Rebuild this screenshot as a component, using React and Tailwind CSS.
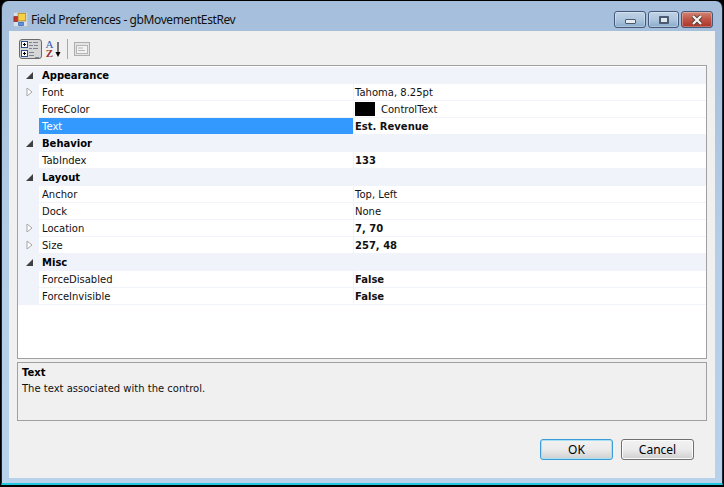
import React from 'react';

const groups = [
  {
    name: 'Appearance',
    rows: [
      { name: 'Font', value: 'Tahoma, 8.25pt', expand: true },
      { name: 'ForeColor', value: 'ControlText', swatch: true },
      { name: 'Text', value: 'Est. Revenue', bold: true, selected: true },
    ],
  },
  { name: 'Behavior', rows: [{ name: 'TabIndex', value: '133', bold: true }] },
  {
    name: 'Layout',
    rows: [
      { name: 'Anchor', value: 'Top, Left' },
      { name: 'Dock', value: 'None' },
      { name: 'Location', value: '7, 70', bold: true, expand: true },
      { name: 'Size', value: '257, 48', bold: true, expand: true },
    ],
  },
  {
    name: 'Misc',
    rows: [
      { name: 'ForceDisabled', value: 'False', bold: true },
      { name: 'ForceInvisible', value: 'False', bold: true },
    ],
  },
];

const AppIcon = () => (
  <svg width="15" height="15" viewBox="0 0 16 16" className="shrink-0 mt-[11px]">
    <rect x="0.5" y="0.5" width="15" height="15" fill="#d9dfe8" stroke="#aeb4bd" strokeDasharray="1 1" />
    <rect x="1" y="5" width="4" height="5" fill="#c8322c" stroke="#7c2320" strokeWidth="0.8" />
    <rect x="5.5" y="1.5" width="8" height="8" fill="#f7cf45" stroke="#b8902a" />
    <rect x="6" y="11" width="5" height="3.5" fill="#5c8fe0" stroke="#3a66b0" strokeWidth="0.8" />
  </svg>
);

const CategorizedIcon = () => (
  <svg width="19" height="17" viewBox="0 0 19 17">
    <rect x="0.5" y="0.5" width="6" height="6" fill="#fff" stroke="#2f4f8f" />
    <path d="M2 3.5h3M3.5 2v3" stroke="#000" />
    <rect x="0.5" y="9.5" width="6" height="6" fill="#fff" stroke="#2f4f8f" />
    <path d="M2 12.5h3M3.5 11v3" stroke="#000" />
    <path d="M8 1.5h3M12 1.5h5M8 4.5h4M13 4.5h4M8 7.5h3M12 7.5h5M8 11.5h5M8 14.5h5M14 16.5h4" stroke="#7a8494" />
  </svg>
);

// A over Z with the down arrow beside it
const SortIcon = () => (
  <div className="flex items-center h-[18px]">
    <div className="flex flex-col w-[9px] text-[11px] leading-[9px] text-center" style={{ fontFamily: '"Liberation Serif", serif' }}>
      <span className="text-[#3a5bb0]">A</span>
      <span className="text-[#a03030] font-bold">Z</span>
    </div>
    <svg width="6" height="17" viewBox="0 0 6 17" className="ml-[1px]">
      <path d="M3 1v12" stroke="#000" />
      <path d="M0.5 11h5L3 16z" fill="#000" />
    </svg>
  </div>
);

const PagesIcon = () => (
  <svg width="16" height="14" viewBox="0 0 16 14">
    <rect x="0.5" y="0.5" width="15" height="13" fill="#e4e4e4" stroke="#adadad" />
    <rect x="2.5" y="3.5" width="11" height="8" fill="#f2f2f2" stroke="#b5b5b5" />
    <path d="M4 6h5M4 8.5h7" stroke="#b5b5b5" />
  </svg>
);

const ExpandArrow = () => (
  <svg width="7" height="10" viewBox="0 0 7 10">
    <path d="M1 1l5 4-5 4z" fill="#fff" stroke="#a6a6a6" />
  </svg>
);

const CollapseArrow = () => (
  <svg width="7" height="7" viewBox="0 0 7 7">
    <path d="M7 0v7H0z" fill="#404040" />
  </svg>
);

const CaptionButton = ({ className, children }) => (
  <div className={`h-[17px] flex items-center justify-center rounded-[3px] border border-[#46587a] shadow-[inset_0_0_0_1px_rgba(255,255,255,0.3)] ${className}`}>
    {children}
  </div>
);

const Row = ({ row }) => (
  <div className="flex h-[17px] border-b border-[#f0f4fa]">
    <div className="w-[21px] shrink-0 bg-[#f0f4fa] flex items-center justify-center pl-[1px]">
      {row.expand && <ExpandArrow />}
    </div>
    <div className={`w-[314px] shrink-0 pl-[3px] pt-[1px] leading-[16px] ${row.selected ? 'bg-[#3399ff] text-white' : ''}`}>
      {row.name}
    </div>
    <div className={`flex-1 flex items-center border-l border-[#f0f4fa] pl-[1px] leading-[16px] ${row.bold ? 'font-bold' : ''}`}>
      {row.swatch && <span className="w-5 h-[14px] bg-black mr-[6px]" />}
      <span className="pt-[1px]">{row.value}</span>
    </div>
  </div>
);

const App = () => (
  <div className="w-[724px] h-[487px] overflow-hidden bg-black" style={{ fontFamily: '"DejaVu Sans", sans-serif' }}>
    <div className="w-[722px] h-[484px] ml-[1px] mt-[1px] rounded-t-[7px] border-l border-r border-[#1c2632] border-b-2 border-b-[#22c8e0] bg-gradient-to-b from-[#a4bedb] via-[#b4cee8] to-[#b9d2ec] flex flex-col">
      <div className="h-[30px] shrink-0 flex items-start pl-[11px] pr-[9px]">
        <AppIcon />
        <span className="ml-[3px] mt-[10px] text-[12px] tracking-[-0.4px] text-[#111]" style={{ fontFamily: '"Noto Sans", sans-serif' }}>Field Preferences - gbMovementEstRev</span>
        <div className="ml-auto flex gap-[2px] mt-[10px]">
          <CaptionButton className="w-[32px] bg-gradient-to-b from-[#c0d2e6] via-[#aec6de] to-[#8aabcc]">
            <span className="w-[11px] h-[5px] mt-[4px] bg-[#e8ecf0] border border-[#4a5a70] rounded-[1px]" />
          </CaptionButton>
          <CaptionButton className="w-[31px] bg-gradient-to-b from-[#c0d2e6] via-[#aec6de] to-[#8aabcc]">
            <span className="w-[10px] h-[8px] border-2 border-[#4a5a70] bg-[#dfe6ee] rounded-[1px]" />
          </CaptionButton>
          <CaptionButton className="w-[32px] bg-gradient-to-b from-[#d08474] via-[#c05444] to-[#a83428]">
            <svg width="14" height="10" viewBox="0 0 14 10">
              <path d="M3 1l8 8M11 1l-8 8" stroke="#4a3a3a" strokeWidth="4" />
              <path d="M3 1l8 8M11 1l-8 8" stroke="#f4f2f0" strokeWidth="2.4" />
            </svg>
          </CaptionButton>
        </div>
      </div>
      <div className="mx-[7px] w-[706px] h-[447px] bg-[#f0f0f0] px-[8px] flex flex-col text-[10px] text-[#111] shrink-0">
        <div className="h-[34px] shrink-0 flex items-center pt-[2px]">
          <div className="ml-[2px] w-[23px] h-[20px] flex items-center justify-center rounded-[3px] border border-[#6a6a6a] bg-[#d6d6d6]">
            <CategorizedIcon />
          </div>
          <div className="ml-[2px] w-[18px] flex items-center justify-center">
            <SortIcon />
          </div>
          <div className="ml-[5px] w-[1px] h-[20px] bg-[#a8a8a8]" />
          <div className="ml-[6px]">
            <PagesIcon />
          </div>
        </div>
        <div className="h-[294px] shrink-0 border border-[#a0a0a0] bg-white pt-[1px]">
          {groups.map((group) => (
            <div key={group.name}>
              <div className="flex h-[17px] bg-[#f0f4fa] font-bold leading-[16px]">
                <div className="w-[21px] shrink-0 flex items-center justify-center pb-[1px] pl-[1px]">
                  <CollapseArrow />
                </div>
                <div className="pl-[3px] pt-[1px] text-black">{group.name}</div>
              </div>
              {group.rows.map((row) => (
                <Row key={row.name} row={row} />
              ))}
            </div>
          ))}
        </div>
        <div className="mt-[3px] h-[59px] shrink-0 border border-[#a0a0a0] pl-[4px] pt-[3px] leading-[14px]">
          <div className="font-bold text-black">Text</div>
          <div className="mt-[2px]">The text associated with the control.</div>
        </div>
        <div className="flex justify-end gap-[8px] mt-[18px] pr-[13px]">
          <button className="w-[73px] h-[21px] rounded-[3px] border border-[#3c9cd8] text-[12px] text-black bg-gradient-to-b from-[#f2f2f2] via-[#ebebeb] to-[#d0d0d0] shadow-[inset_0_0_0_1px_#a8e0f4]" style={{ fontFamily: '"Noto Sans", sans-serif' }}>
            OK
          </button>
          <button className="w-[73px] h-[21px] rounded-[3px] border border-[#707070] text-[12px] text-black bg-gradient-to-b from-[#f2f2f2] via-[#ebebeb] to-[#d0d0d0] shadow-[inset_0_0_0_1px_#fbfbfb]" style={{ fontFamily: '"Noto Sans", sans-serif' }}>
            Cancel
          </button>
        </div>
      </div>
    </div>
  </div>
);

export default App;
